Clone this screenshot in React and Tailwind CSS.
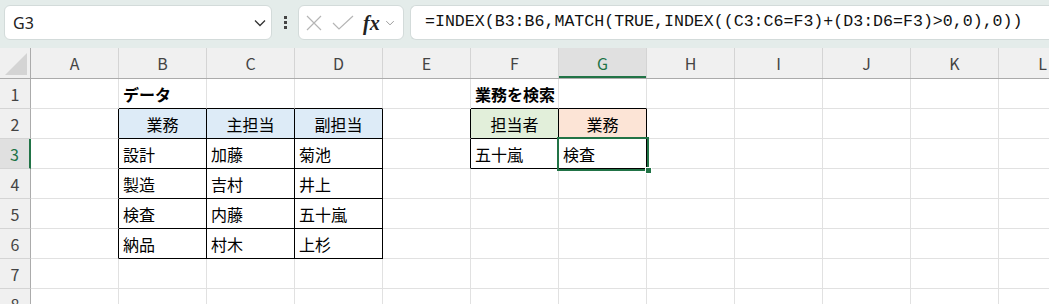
import React from 'react';

const COLS = ['A', 'B', 'C', 'D', 'E', 'F', 'G', 'H', 'I', 'J', 'K', 'L'];

const rows = [
  { n: 1, cells: { 1: { t: 'データ', bold: true }, 5: { t: '業務を検索', bold: true } } },
  {
    n: 2,
    cells: {
      1: { t: '業務', center: true, bg: 'bg-[#ddebf7]' },
      2: { t: '主担当', center: true, bg: 'bg-[#ddebf7]' },
      3: { t: '副担当', center: true, bg: 'bg-[#ddebf7]' },
      5: { t: '担当者', center: true, bg: 'bg-[#e2efda]' },
      6: { t: '業務', center: true, bg: 'bg-[#fce4d6]' },
    },
  },
  { n: 3, cells: { 1: { t: '設計' }, 2: { t: '加藤' }, 3: { t: '菊池' }, 5: { t: '五十嵐' }, 6: { t: '検査' } } },
  { n: 4, cells: { 1: { t: '製造' }, 2: { t: '吉村' }, 3: { t: '井上' } } },
  { n: 5, cells: { 1: { t: '検査' }, 2: { t: '内藤' }, 3: { t: '五十嵐' } } },
  { n: 6, cells: { 1: { t: '納品' }, 2: { t: '村木' }, 3: { t: '上杉' } } },
  { n: 7, cells: {} },
  { n: 8, cells: {} },
];

const inTable = (r, c) =>
  (r >= 2 && r <= 6 && c >= 1 && c <= 3) || (r >= 2 && r <= 3 && c >= 5 && c <= 6);

const Chevron = ({ className }) => (
  <svg viewBox="0 0 12 8" className={className} fill="none" stroke="currentColor" strokeWidth="1.3">
    <path d="M1 1.5 L6 6.5 L11 1.5" />
  </svg>
);

const Cell = ({ r, c, data }) => {
  const rightBlack = inTable(r, c) || inTable(r, c + 1);
  const bottomBlack = inTable(r, c) || inTable(r + 1, c);
  const selected = r === 3 && c === 6;
  return (
    <div
      className={
        'relative w-[88px] h-[30px] shrink-0 flex items-center border-r border-b px-[4px] text-[16px] text-black ' +
        (rightBlack ? 'border-r-black ' : 'border-r-[#e1e1e1] ') +
        (bottomBlack ? 'border-b-black ' : 'border-b-[#e1e1e1] ') +
        (data?.bg ? data.bg + ' ' : 'bg-white ') +
        (data?.center ? 'justify-center ' : '') +
        (data?.bold ? 'font-bold ' : '')
      }
    >
      {data && <span className="whitespace-nowrap leading-none">{data.t}</span>}
      {selected && (
        <>
          <div className="absolute z-10 top-[-2px] left-[-2px] right-[-3px] bottom-[-3px] border-2 border-[#217346]" />
          <div className="absolute z-20 right-[-6px] bottom-[-6px] w-[7px] h-[7px] bg-[#217346] border border-white" />
        </>
      )}
    </div>
  );
};

export default function App() {
  return (
    <div
      className="w-[1049px] h-[304px] overflow-hidden bg-white"
      style={{ fontFamily: '"Noto Sans CJK JP", "Noto Sans", sans-serif' }}
    >
      {/* formula bar */}
      <div className="h-[48px] bg-[#e4ecea] flex items-start pt-[5px] pl-[4px]">
        <div className="w-[268px] h-[35px] bg-white rounded-[6px] border border-[#d3dbda] flex items-center pl-[8px] pr-[4px]">
          <span className="text-[16px] text-[#222] flex-1" style={{ fontFamily: '"Noto Sans", sans-serif' }}>G3</span>
          <Chevron className="w-[12px] h-[8px] text-[#333] mr-[1px]" />
        </div>
        <div className="w-[26px] h-[35px] flex flex-col items-center justify-center gap-[2px]">
          <span className="w-[3px] h-[3px] bg-[#444]" />
          <span className="w-[3px] h-[3px] bg-[#444]" />
          <span className="w-[3px] h-[3px] bg-[#444]" />
        </div>
        <div className="w-[106px] h-[35px] bg-white rounded-[6px] border border-[#d3dbda] flex items-center pl-[7px]">
          <svg viewBox="0 0 16 16" className="w-[16px] h-[16px] text-[#b5b5b5]" fill="none" stroke="currentColor" strokeWidth="1.2">
            <path d="M1 1 L15 15 M15 1 L1 15" />
          </svg>
          <svg viewBox="0 0 22 16" className="w-[22px] h-[16px] ml-[10px] text-[#b5b5b5]" fill="none" stroke="currentColor" strokeWidth="1.2">
            <path d="M1 8 L7 14 L21 1" />
          </svg>
          <span
            className="ml-[9px] text-[20px] italic font-bold text-[#222] leading-none"
            style={{ fontFamily: '"Liberation Serif", serif' }}
          >
            fx
          </span>
          <Chevron className="ml-[5px] w-[10px] h-[6px] text-[#999]" />
        </div>
        <div className="ml-[6px] flex-1 h-[35px] bg-white rounded-l-[6px] border border-r-0 border-[#d3dbda] flex items-center pl-[14px]">
          <span className="text-[16.6px] text-[#111] whitespace-nowrap" style={{ fontFamily: '"Liberation Mono", monospace' }}>
            =INDEX(B3:B6,MATCH(TRUE,INDEX((C3:C6=F3)+(D3:D6=F3)&gt;0,0),0))
          </span>
        </div>
      </div>

      {/* column headers */}
      <div className="flex h-[31px] bg-[#f0f0f0] border-b border-[#ababab]">
        <div className="w-[31px] h-[30px] shrink-0 border-r border-[#ababab] flex items-end justify-end pr-[3px] pb-[3px]">
          <svg viewBox="0 0 22 22" className="w-[22px] h-[22px]">
            <path d="M22 0 L22 22 L0 22 Z" fill="#d4d4d4" />
          </svg>
        </div>
        {COLS.map((c, i) =>
          i === 6 ? (
            <div
              key={c}
              className="w-[88px] h-[30px] shrink-0 border-r border-[#d4d4d4] bg-[#e0e0e0] flex items-center justify-center text-[16px] text-[#217346] shadow-[inset_0_-2px_0_#217346]"
            >
              {c}
            </div>
          ) : (
            <div
              key={c}
              className="w-[88px] h-[30px] shrink-0 border-r border-[#d4d4d4] flex items-center justify-center text-[16px] text-[#444]"
            >
              {c}
            </div>
          )
        )}
      </div>

      {/* rows */}
      {rows.map((row) => (
        <div key={row.n} className="flex">
          {row.n === 3 ? (
            <div className="w-[31px] h-[30px] shrink-0 bg-[#e0e0e0] border-r-2 border-r-[#217346] border-b border-b-[#d4d4d4] flex items-center justify-center text-[16px] text-[#217346]">
              {row.n}
            </div>
          ) : (
            <div className="w-[31px] h-[30px] shrink-0 bg-[#f0f0f0] border-r border-r-[#ababab] border-b border-b-[#d4d4d4] flex items-center justify-center text-[16px] text-[#444]">
              {row.n}
            </div>
          )}
          {COLS.map((c, i) => (
            <Cell key={c} r={row.n} c={i} data={row.cells[i]} />
          ))}
        </div>
      ))}
    </div>
  );
}
